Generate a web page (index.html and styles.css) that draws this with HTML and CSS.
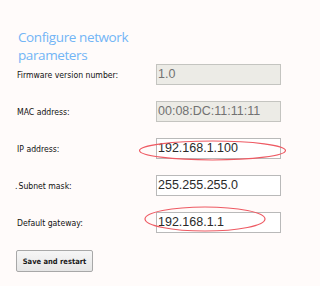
FILE: index.html
```html
<!DOCTYPE html>
<html>
<head>
<meta charset="utf-8">
<link rel="stylesheet" href="styles.css">
</head>
<body>
<div class="page">
  <h1 class="title">Configure network<br>parameters</h1>
  <div class="form">
    <label class="lbl">Firmware version number:</label>
    <div class="field disabled">1.0</div>
    <label class="lbl">MAC address:</label>
    <div class="field disabled">00:08:DC:11:11:11</div>
    <label class="lbl">IP address:</label>
    <div class="field">192.168.1.100</div>
    <label class="lbl lbl-dot"><span class="dot">.</span>Subnet mask:</label>
    <div class="field">255.255.255.0</div>
    <label class="lbl">Default gateway:</label>
    <div class="field">192.168.1.1</div>
  </div>
  <button class="btn">Save and restart</button>
  <svg class="marks" width="300" height="286" viewBox="0 0 300 286">
    <ellipse cx="212.5" cy="150.5" rx="73" ry="9.5" fill="none" stroke="#ee5a63" stroke-width="1.2"/>
    <ellipse cx="205" cy="219" rx="60" ry="12" fill="none" stroke="#ee5a63" stroke-width="1.2"/>
  </svg>
</div>
</body>
</html>
```

FILE: styles.css
```css
html, body {
  margin: 0;
  padding: 0;
  background: #fffbfa;
}
.page {
  position: relative;
  width: 300px;
  height: 286px;
  padding: 28px 0 0 17px;
  box-sizing: border-box;
  font-family: "DejaVu Sans Condensed", "DejaVu Sans", sans-serif;
}
.title {
  margin: 0 0 0 1px;
  font-family: "Open Sans", "Liberation Sans", sans-serif;
  font-weight: normal;
  font-size: 13.5px;
  letter-spacing: -0.4px;
  line-height: 18px;
  color: #72b5f6;
  height: 36px;
}
.form {
  display: grid;
  grid-template-columns: 139px 125px;
  grid-auto-rows: 21px;
  row-gap: 16px;
  align-items: center;
}
.lbl {
  font-size: 8.6px;
  color: #111;
  padding-top: 1px;
}
.lbl-dot {
  margin-left: -2px;
}
.dot {
  margin-right: 1px;
}
.field {
  height: 21px;
  box-sizing: border-box;
  border: 1px solid #b9b9b9;
  background: #fff;
  font-family: "Liberation Sans", Arial, sans-serif;
  font-size: 12.5px;
  line-height: 19px;
  padding-left: 1px;
  color: #2a2a2a;
}
.field.disabled {
  background: #ecebe6;
  border-color: #c4c4c0;
  color: #727272;
}
.btn {
  display: block;
  margin-top: 17px;
  margin-left: -1px;
  width: 77px;
  height: 22px;
  padding: 0;
  border: 1px solid #a8a8a8;
  border-radius: 2px;
  background: linear-gradient(#f6f6f6, #e6e6e6);
  font-family: "DejaVu Sans Condensed", "DejaVu Sans", sans-serif;
  font-size: 7.5px;
  font-weight: bold;
  color: #1a1a1a;
}
.marks {
  position: absolute;
  left: 0;
  top: 0;
  pointer-events: none;
}
```
